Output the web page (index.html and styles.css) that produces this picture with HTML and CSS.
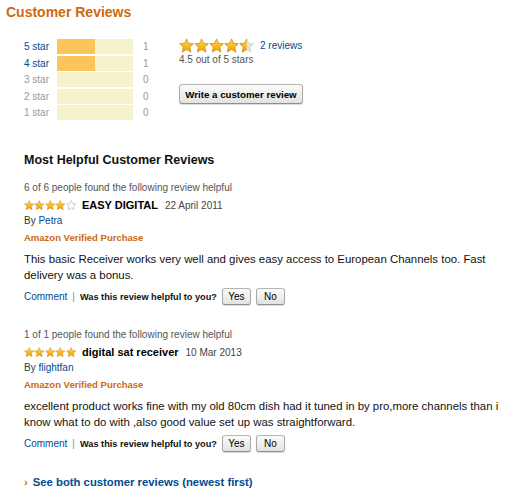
FILE: index.html
```html
<!DOCTYPE html>
<html>
<head>
<meta charset="utf-8">
<title>Customer Reviews</title>
<link rel="stylesheet" href="styles.css">
</head>
<body>
<svg class="defs" width="0" height="0" aria-hidden="true">
  <defs>
    <linearGradient id="gold" x1="0" y1="0" x2="0" y2="1">
      <stop offset="0" stop-color="#ffdb55"/>
      <stop offset="1" stop-color="#f39c00"/>
    </linearGradient>
    <clipPath id="lefthalf"><rect x="0" y="0" width="10.3" height="20"/></clipPath>
    <path id="star" d="M10 1.2 L12.7 7 L19 7.6 L14.2 11.9 L15.7 18.6 L10 15.2 L4.3 18.6 L5.8 11.9 L1 7.6 L7.3 7 Z"/>
  </defs>
</svg>

<div class="page">
  <h1 class="title">Customer Reviews</h1>

  <div class="summary">
    <div class="histogram">
      <div class="hrow"><a class="hlabel link">5 star</a><div class="bar"><div class="fill" style="width:50%"></div></div><span class="count">1</span></div>
      <div class="hrow"><a class="hlabel link">4 star</a><div class="bar"><div class="fill" style="width:50%"></div></div><span class="count">1</span></div>
      <div class="hrow"><span class="hlabel">3 star</span><div class="bar"></div><span class="count">0</span></div>
      <div class="hrow"><span class="hlabel">2 star</span><div class="bar"></div><span class="count">0</span></div>
      <div class="hrow"><span class="hlabel">1 star</span><div class="bar"></div><span class="count">0</span></div>
    </div>

    <div class="overall">
      <div class="overall-stars">
        <span class="stars big">
          <svg viewBox="0 0 20 20"><use href="#star" class="s-full"/></svg>
          <svg viewBox="0 0 20 20"><use href="#star" class="s-full"/></svg>
          <svg viewBox="0 0 20 20"><use href="#star" class="s-full"/></svg>
          <svg viewBox="0 0 20 20"><use href="#star" class="s-full"/></svg>
          <svg viewBox="0 0 20 20"><use href="#star" class="s-grey"/><use href="#star" class="s-full" clip-path="url(#lefthalf)"/></svg>
        </span>
        <a class="link reviews-count">2 reviews</a>
      </div>
      <div class="out-of">4.5 out of 5 stars</div>
      <button class="btn write-btn">Write a customer review</button>
    </div>
  </div>

  <div class="reviews">
    <h2 class="helpful-title">Most Helpful Customer Reviews</h2>

    <div class="review">
      <div class="meta">6 of 6 people found the following review helpful</div>
      <div class="stars-line">
        <span class="stars small">
          <svg viewBox="0 0 20 20"><use href="#star" class="s-full"/></svg>
          <svg viewBox="0 0 20 20"><use href="#star" class="s-full"/></svg>
          <svg viewBox="0 0 20 20"><use href="#star" class="s-full"/></svg>
          <svg viewBox="0 0 20 20"><use href="#star" class="s-full"/></svg>
          <svg viewBox="0 0 20 20"><use href="#star" class="s-empty"/></svg>
        </span>
        <span class="review-title">EASY DIGITAL</span>
        <span class="review-date">22 April 2011</span>
      </div>
      <div class="byline">By <a class="link">Petra</a></div>
      <div class="verified">Amazon Verified Purchase</div>
      <p class="review-body">This basic Receiver works very well and gives easy access to European Channels too. Fast delivery was a bonus.</p>
      <div class="actions">
        <a class="link">Comment</a>
        <span class="sep">|</span>
        <span class="question">Was this review helpful to you?</span>
        <button class="btn vote">Yes</button>
        <button class="btn vote">No</button>
      </div>
    </div>

    <div class="review second">
      <div class="meta">1 of 1 people found the following review helpful</div>
      <div class="stars-line">
        <span class="stars small">
          <svg viewBox="0 0 20 20"><use href="#star" class="s-full"/></svg>
          <svg viewBox="0 0 20 20"><use href="#star" class="s-full"/></svg>
          <svg viewBox="0 0 20 20"><use href="#star" class="s-full"/></svg>
          <svg viewBox="0 0 20 20"><use href="#star" class="s-full"/></svg>
          <svg viewBox="0 0 20 20"><use href="#star" class="s-full"/></svg>
        </span>
        <span class="review-title">digital sat receiver</span>
        <span class="review-date">10 Mar 2013</span>
      </div>
      <div class="byline">By <a class="link">flightfan</a></div>
      <div class="verified">Amazon Verified Purchase</div>
      <p class="review-body">excellent product works fine with my old 80cm dish had it tuned in by pro,more channels than i know what to do with ,also good value set up was straightforward.</p>
      <div class="actions">
        <a class="link">Comment</a>
        <span class="sep">|</span>
        <span class="question">Was this review helpful to you?</span>
        <button class="btn vote">Yes</button>
        <button class="btn vote">No</button>
      </div>
    </div>

    <div class="see-all"><span class="chev">›</span><a class="link">See both customer reviews (newest first)</a></div>
  </div>
</div>
</body>
</html>
```

FILE: styles.css
```css
html, body {
  margin: 0;
  padding: 0;
  background: #fff;
}

body {
  font-family: "Liberation Sans", Arial, sans-serif;
  color: #000;
}

.defs {
  position: absolute;
  width: 0;
  height: 0;
  overflow: hidden;
}

.link {
  color: #004b91;
  text-decoration: none;
}

.page {
  padding: 4px 0 0 6px;
}

.title {
  margin: 0;
  font-size: 14px;
  line-height: 16px;
  font-weight: bold;
  color: #cd6a0f;
}

/* summary */
.summary {
  display: flex;
  align-items: flex-start;
  margin: 19px 0 0 18px;
}

.histogram {
  display: flex;
  flex-direction: column;
  gap: 1.6px;
  width: 131px;
}

.hrow {
  display: flex;
  align-items: center;
  height: 15px;
  font-size: 10px;
}

.hlabel {
  width: 33px;
  color: #999;
}

.hlabel.link {
  color: #004b91;
}

.bar {
  width: 76px;
  height: 15px;
  background: #f6f2cc;
}

.fill {
  height: 100%;
  background: #fdc35c;
}

.count {
  margin-left: 10px;
  color: #999;
}

.overall {
  display: flex;
  flex-direction: column;
  align-items: flex-start;
  margin-left: 24px;
}

.overall-stars {
  display: flex;
  align-items: center;
  height: 15px;
  margin-top: -1px;
}

.stars {
  display: flex;
}

.stars svg {
  display: block;
}

.stars.big svg {
  width: 15.2px;
  height: 15.2px;
  margin-right: -0.2px;
}

.stars.small svg {
  width: 10.4px;
  height: 10.4px;
}

.s-full {
  fill: url(#gold);
  stroke: #c98200;
  stroke-width: 0.9;
}

.s-grey {
  fill: #e4e4e4;
  stroke: #c8c8c8;
  stroke-width: 0.9;
}

.s-empty {
  fill: #fff;
  stroke: #aaa;
  stroke-width: 1.1;
}

.reviews-count {
  margin-left: 6px;
  font-size: 10px;
}

.out-of {
  font-size: 10px;
  line-height: 12px;
  color: #555;
  margin-top: 1px;
}

.btn {
  font-family: "Liberation Sans", Arial, sans-serif;
  color: #000;
  background: linear-gradient(#fbfbfb, #e2e2e0);
  border: 1px solid #aaa;
  border-color: #b5b5b5 #a9a9a9 #8f8f8f;
  border-radius: 3px;
  box-shadow: 0 1px 1px rgba(0, 0, 0, 0.15);
  padding: 0;
  cursor: pointer;
}

.write-btn {
  margin-top: 18px;
  width: 124px;
  height: 20px;
  font-size: 9.7px;
  font-weight: bold;
}

/* reviews */
.reviews {
  margin-left: 18px;
}

.helpful-title {
  margin: 32px 0 12px;
  font-size: 12.5px;
  line-height: 16px;
  font-weight: bold;
  color: #111;
}

.meta {
  font-size: 10px;
  line-height: 16.5px;
  color: #555;
}

.stars-line {
  display: flex;
  align-items: center;
  height: 16.5px;
}

.review-title {
  margin-left: 6px;
  font-size: 11px;
  font-weight: bold;
}

.review-date {
  margin-left: 7px;
  font-size: 10px;
  color: #444;
}

.byline {
  font-size: 10px;
  line-height: 16.5px;
  color: #333;
}

.verified {
  font-size: 9.5px;
  line-height: 16.5px;
  font-weight: bold;
  color: #cd6a0f;
}

.review-body {
  margin: 5px 0 0;
  font-size: 11.4px;
  line-height: 16px;
  color: #111;
}

.actions {
  display: flex;
  align-items: center;
  height: 17px;
  margin-top: 5px;
  font-size: 10px;
}

.sep {
  margin: 0 5px;
  color: #888;
}

.question {
  font-size: 9.2px;
  font-weight: bold;
  color: #111;
}

.vote {
  width: 29px;
  height: 17px;
  margin-left: 5px;
  font-size: 10px;
}

.review.second {
  margin-top: 22px;
}

.see-all {
  margin-top: 22px;
  font-size: 11.3px;
  line-height: 16px;
  font-weight: bold;
}

.chev {
  color: #cd6a0f;
  margin-right: 5px;
}
```
